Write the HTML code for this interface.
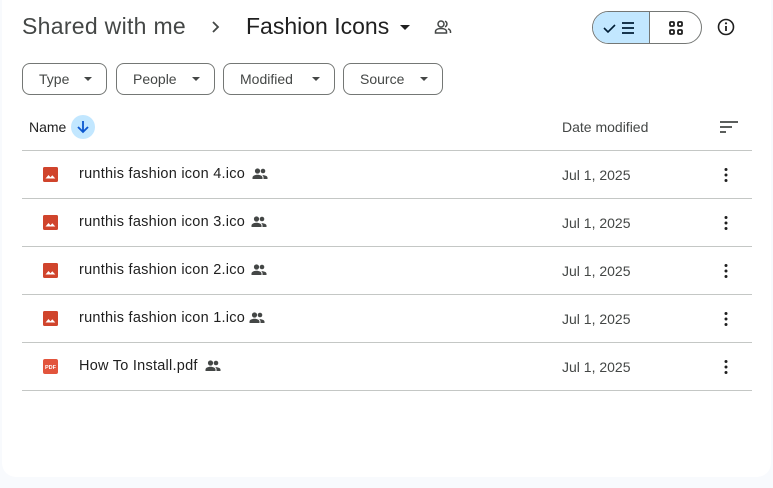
<!DOCTYPE html><html><head><style>
body{margin:0;width:773px;height:488px;background:#f8fafd;font-family:"Liberation Sans",sans-serif;color:#1f1f1f;position:relative;overflow:hidden}
.card{position:absolute;left:2px;top:-10px;width:769px;height:487px;background:#fff;border-radius:0 0 14px 14px}
.a{position:absolute;white-space:nowrap}
.chip{position:absolute;top:63px;height:30px;border:1px solid #747775;border-radius:8px;font-size:14px;color:#444746;line-height:30px;box-sizing:content-box}
.chip span{position:absolute;left:16px}
.chip i{position:absolute;right:14px;top:13px;border:4px solid transparent;border-top:4px solid #444746;border-bottom:0;width:0;height:0}
.line{position:absolute;left:22px;width:730px;height:1px;background:#c4c7c5}
.fn{font-size:14.5px;letter-spacing:0.25px;color:#1f1f1f}
.dt{font-size:14px;color:#444746}
</style></head><body>
<div class="card"></div>
<div class="a" style="left:22px;top:13px;font-size:23px;letter-spacing:0.3px;color:#444746">Shared with me</div>
<svg class="a" style="left:209px;top:19px" width="14" height="16" viewBox="0 0 14 16"><path d="M4 3l5 5-5 5" fill="none" stroke="#444746" stroke-width="1.8"/></svg>
<div class="a" style="left:246px;top:13px;font-size:23px;color:#1f1f1f">Fashion Icons</div>
<div class="a" style="left:400px;top:25px;border:5px solid transparent;border-top:5px solid #1f1f1f;border-bottom:0"></div>
<svg class="a" style="left:434px;top:19px" width="18" height="16" viewBox="0 0 18 16"><circle cx="7" cy="5" r="3" fill="none" stroke="#444746" stroke-width="1.5"/><path d="M1.5 14v-1.5c0-2 2.5-3 5.5-3s5.5 1 5.5 3V14z" fill="none" stroke="#444746" stroke-width="1.5"/><path d="M11 2.2a3 3 0 010 5.6M14 9.8c1.5.6 2.5 1.5 2.5 2.7V14" fill="none" stroke="#444746" stroke-width="1.5"/></svg>
<div class="a" style="left:592px;top:11px;width:108px;height:31px;border:1px solid #747775;border-radius:17px;overflow:hidden">
<div style="position:absolute;left:0;top:0;width:56px;height:31px;background:#c2e7ff;border-right:1px solid #747775"></div>
<svg style="position:absolute;left:10px;top:8px" width="36" height="16" viewBox="0 0 36 16"><path d="M1 8l4 4 7-7" fill="none" stroke="#001d35" stroke-width="1.6"/><path d="M19 3h12M19 8h12M19 13h12" stroke="#001d35" stroke-width="1.8"/></svg>
<svg style="position:absolute;left:75px;top:8px" width="16" height="16" viewBox="0 0 16 16"><g fill="none" stroke="#1f1f1f" stroke-width="1.8"><rect x="2" y="2" width="4" height="4" rx="1"/><rect x="10" y="2" width="4" height="4" rx="1"/><rect x="2" y="10" width="4" height="4" rx="1"/><rect x="10" y="10" width="4" height="4" rx="1"/></g></svg>
</div>
<svg class="a" style="left:716px;top:17px" width="20" height="20" viewBox="0 0 20 20"><circle cx="10" cy="10" r="7.5" fill="none" stroke="#1f1f1f" stroke-width="1.6"/><path d="M10 9v5" stroke="#1f1f1f" stroke-width="1.8"/><circle cx="10" cy="6.3" r="1.1" fill="#1f1f1f"/></svg>
<div class="chip" style="left:22px;width:83px"><span>Type</span><i></i></div>
<div class="chip" style="left:116px;width:97px"><span>People</span><i></i></div>
<div class="chip" style="left:223px;width:110px"><span>Modified</span><i></i></div>
<div class="chip" style="left:343px;width:98px"><span>Source</span><i></i></div>
<div class="a" style="left:29px;top:119px;font-size:14px;color:#1f1f1f">Name</div>
<div class="a" style="left:71px;top:115px;width:24px;height:24px;border-radius:12px;background:#c2e7ff"></div>
<svg class="a" style="left:75px;top:119px" width="16" height="16" viewBox="0 0 16 16"><path d="M8 2v11M3 8l5 5 5-5" fill="none" stroke="#0b57d0" stroke-width="1.8"/></svg>
<div class="a" style="left:562px;top:119px;font-size:14px;color:#444746">Date modified</div>
<svg class="a" style="left:720px;top:119px" width="20" height="16" viewBox="0 0 20 16"><path d="M0 3h18M0 8h12M0 13h6" stroke="#444746" stroke-width="1.8"/></svg>
<div class="line" style="top:150px"></div>
<div class="line" style="top:198px"></div><div class="line" style="top:246px"></div><div class="line" style="top:294px"></div><div class="line" style="top:342px"></div><div class="line" style="top:390px"></div>
<!-- row 1 -->
<svg class="a" style="left:42px;top:166px" width="17" height="17" viewBox="0 0 17 17"><rect x="1" y="1" width="15" height="15" rx="1.5" fill="#d0442c"/><path d="M3.5 12.5l3-3.5 2 2.2 1.8-2 3 3.3z" fill="#fff"/></svg>
<div class="a fn" style="left:79px;top:166px">runthis fashion icon 4.ico</div>
<svg class="a" style="left:252px;top:167px" width="16" height="14" viewBox="0 0 16 14"><circle cx="5.5" cy="4" r="2.6" fill="#444746"/><circle cx="11" cy="4" r="2.3" fill="#444746"/><path d="M0.5 12v-1.5c0-1.7 2.5-2.8 5-2.8s5 1.1 5 2.8V12zM11.5 12v-1.5c0-1-.5-1.8-1.3-2.4 2.3 0 5.3.8 5.3 2.4V12z" fill="#444746"/></svg>
<div class="a dt" style="left:562px;top:167px">Jul 1, 2025</div>
<svg class="a" style="left:722px;top:166px" width="8" height="18" viewBox="0 0 8 18"><circle cx="4" cy="3.5" r="1.5" fill="#1f1f1f"/><circle cx="4" cy="9" r="1.5" fill="#1f1f1f"/><circle cx="4" cy="14.5" r="1.5" fill="#1f1f1f"/></svg>
<!-- row 2 -->
<svg class="a" style="left:42px;top:214px" width="17" height="17" viewBox="0 0 17 17"><rect x="1" y="1" width="15" height="15" rx="1.5" fill="#d0442c"/><path d="M3.5 12.5l3-3.5 2 2.2 1.8-2 3 3.3z" fill="#fff"/></svg>
<div class="a fn" style="left:79px;top:214px">runthis fashion icon 3.ico</div>
<svg class="a" style="left:251px;top:215px" width="16" height="14" viewBox="0 0 16 14"><circle cx="5.5" cy="4" r="2.6" fill="#444746"/><circle cx="11" cy="4" r="2.3" fill="#444746"/><path d="M0.5 12v-1.5c0-1.7 2.5-2.8 5-2.8s5 1.1 5 2.8V12zM11.5 12v-1.5c0-1-.5-1.8-1.3-2.4 2.3 0 5.3.8 5.3 2.4V12z" fill="#444746"/></svg>
<div class="a dt" style="left:562px;top:215px">Jul 1, 2025</div>
<svg class="a" style="left:722px;top:214px" width="8" height="18" viewBox="0 0 8 18"><circle cx="4" cy="3.5" r="1.5" fill="#1f1f1f"/><circle cx="4" cy="9" r="1.5" fill="#1f1f1f"/><circle cx="4" cy="14.5" r="1.5" fill="#1f1f1f"/></svg>
<!-- row 3 -->
<svg class="a" style="left:42px;top:262px" width="17" height="17" viewBox="0 0 17 17"><rect x="1" y="1" width="15" height="15" rx="1.5" fill="#d0442c"/><path d="M3.5 12.5l3-3.5 2 2.2 1.8-2 3 3.3z" fill="#fff"/></svg>
<div class="a fn" style="left:79px;top:262px">runthis fashion icon 2.ico</div>
<svg class="a" style="left:251px;top:263px" width="16" height="14" viewBox="0 0 16 14"><circle cx="5.5" cy="4" r="2.6" fill="#444746"/><circle cx="11" cy="4" r="2.3" fill="#444746"/><path d="M0.5 12v-1.5c0-1.7 2.5-2.8 5-2.8s5 1.1 5 2.8V12zM11.5 12v-1.5c0-1-.5-1.8-1.3-2.4 2.3 0 5.3.8 5.3 2.4V12z" fill="#444746"/></svg>
<div class="a dt" style="left:562px;top:263px">Jul 1, 2025</div>
<svg class="a" style="left:722px;top:262px" width="8" height="18" viewBox="0 0 8 18"><circle cx="4" cy="3.5" r="1.5" fill="#1f1f1f"/><circle cx="4" cy="9" r="1.5" fill="#1f1f1f"/><circle cx="4" cy="14.5" r="1.5" fill="#1f1f1f"/></svg>
<!-- row 4 -->
<svg class="a" style="left:42px;top:310px" width="17" height="17" viewBox="0 0 17 17"><rect x="1" y="1" width="15" height="15" rx="1.5" fill="#d0442c"/><path d="M3.5 12.5l3-3.5 2 2.2 1.8-2 3 3.3z" fill="#fff"/></svg>
<div class="a fn" style="left:79px;top:310px">runthis fashion icon 1.ico</div>
<svg class="a" style="left:249px;top:311px" width="16" height="14" viewBox="0 0 16 14"><circle cx="5.5" cy="4" r="2.6" fill="#444746"/><circle cx="11" cy="4" r="2.3" fill="#444746"/><path d="M0.5 12v-1.5c0-1.7 2.5-2.8 5-2.8s5 1.1 5 2.8V12zM11.5 12v-1.5c0-1-.5-1.8-1.3-2.4 2.3 0 5.3.8 5.3 2.4V12z" fill="#444746"/></svg>
<div class="a dt" style="left:562px;top:311px">Jul 1, 2025</div>
<svg class="a" style="left:722px;top:310px" width="8" height="18" viewBox="0 0 8 18"><circle cx="4" cy="3.5" r="1.5" fill="#1f1f1f"/><circle cx="4" cy="9" r="1.5" fill="#1f1f1f"/><circle cx="4" cy="14.5" r="1.5" fill="#1f1f1f"/></svg>
<!-- row 5 -->
<svg class="a" style="left:42px;top:358px" width="17" height="17" viewBox="0 0 17 17"><rect x="1" y="1" width="15" height="15" rx="2" fill="#e2543c"/><text x="8.5" y="11" font-size="5.5" font-weight="bold" fill="#fff" text-anchor="middle" font-family="Liberation Sans">PDF</text></svg>
<div class="a fn" style="left:79px;top:358px">How To Install.pdf</div>
<svg class="a" style="left:205px;top:359px" width="16" height="14" viewBox="0 0 16 14"><circle cx="5.5" cy="4" r="2.6" fill="#444746"/><circle cx="11" cy="4" r="2.3" fill="#444746"/><path d="M0.5 12v-1.5c0-1.7 2.5-2.8 5-2.8s5 1.1 5 2.8V12zM11.5 12v-1.5c0-1-.5-1.8-1.3-2.4 2.3 0 5.3.8 5.3 2.4V12z" fill="#444746"/></svg>
<div class="a dt" style="left:562px;top:359px">Jul 1, 2025</div>
<svg class="a" style="left:722px;top:358px" width="8" height="18" viewBox="0 0 8 18"><circle cx="4" cy="3.5" r="1.5" fill="#1f1f1f"/><circle cx="4" cy="9" r="1.5" fill="#1f1f1f"/><circle cx="4" cy="14.5" r="1.5" fill="#1f1f1f"/></svg>
</body></html>
